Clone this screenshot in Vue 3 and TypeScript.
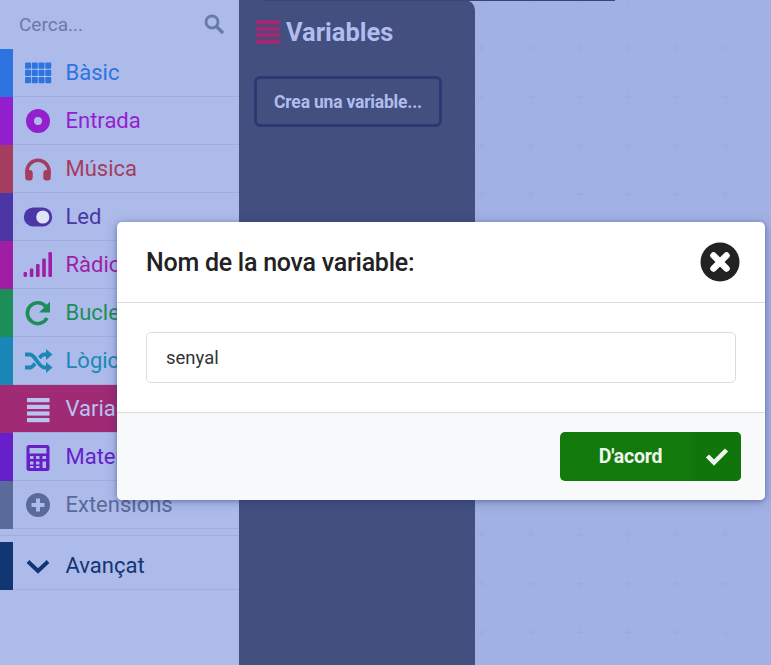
<script setup lang="ts">
interface Category { name: string; color: string; icon: string; active?: boolean }
const categories: Category[] = [
  { name: 'Bàsic', color: '#2d74e0', icon: 'grid' },
  { name: 'Entrada', color: '#941fce', icon: 'disc' },
  { name: 'Música', color: '#a53d5f', icon: 'head' },
  { name: 'Led', color: '#4c36a6', icon: 'toggle' },
  { name: 'Ràdio', color: '#a01ea5', icon: 'signal' },
  { name: 'Bucles', color: '#1c8f58', icon: 'redo' },
  { name: 'Lògica', color: '#1a87b8', icon: 'shuffle' },
  { name: 'Variables', color: '#a02a74', icon: 'bars', active: true },
  { name: 'Matemàtiques', color: '#671fc9', icon: 'calc' },
  { name: 'Extensions', color: '#5a6a9a', icon: 'plus' }
]
const gridCells = [0, 1, 2, 3].flatMap((c) => [0, 1, 2].map((r) => ({ x: c * 6.75, y: r * 7.25 })))
</script>

<template>
  <div class="page">
    <aside class="sidebar">
      <div class="search">
        <span>Cerca...</span>
        <svg class="search-icon" width="20" height="20" viewBox="0 0 20 20">
          <circle cx="8" cy="8" r="6" fill="none" stroke="currentColor" stroke-width="2.8" />
          <path d="M12.5 12.5L18 18" stroke="currentColor" stroke-width="3.4" stroke-linecap="round" />
        </svg>
      </div>
      <ul class="list">
        <li
          v-for="c in categories"
          :key="c.name"
          class="row"
          :class="{ active: c.active }"
          :style="{ '--cat': c.color }"
        >
          <span class="strip"></span>
          <svg class="icon" width="30" height="30" viewBox="0 0 30 30">
            <g v-if="c.icon === 'grid'" fill="currentColor">
              <rect v-for="(g, i) in gridCells" :key="i" :x="2 + g.x" :y="4.5 + g.y" width="6" height="6.2" rx="1" />
            </g>
            <path v-else-if="c.icon === 'disc'" fill="currentColor" fill-rule="evenodd"
              d="M15 3a12 12 0 1 0 0 24a12 12 0 1 0 0-24zM15 11a4 4 0 1 1 0 8a4 4 0 1 1 0-8z" />
            <g v-else-if="c.icon === 'head'" fill="currentColor">
              <path d="M2.200 20v-2.700a12.800 12.800 0 0 1 25.600 0V20h-3.600v-2.700a9.200 9.200 0 0 0-18.400 0V20z" />
              <rect x="2.200" y="16" width="7.500" height="10.500" rx="3" />
              <rect x="20.300" y="16" width="7.500" height="10.500" rx="3" />
            </g>
            <g v-else-if="c.icon === 'toggle'">
              <rect x="0.800" y="5.500" width="28.400" height="19" rx="9.500" fill="currentColor" />
              <circle cx="19.800" cy="15" r="6.600" fill="#dfe3f7" />
            </g>
            <g v-else-if="c.icon === 'signal'" fill="currentColor">
              <rect x="0.500" y="22" width="3.600" height="5" rx="1.400" />
              <rect x="6.800" y="18.500" width="3.600" height="8.500" rx="1.200" />
              <rect x="13" y="14" width="3.600" height="13" rx="1.200" />
              <rect x="19.200" y="8.500" width="3.600" height="18.500" rx="1.200" />
              <rect x="25.400" y="2" width="3.600" height="25" rx="1.200" />
            </g>
            <g v-else-if="c.icon === 'redo'">
              <path d="M22.800 8.500A10.400 10.400 0 1 0 24 20" fill="none" stroke="currentColor" stroke-width="3.600" />
              <path d="M27 3.500V14.500H16z" fill="currentColor" />
            </g>
            <g v-else-if="c.icon === 'shuffle'">
              <path d="M2 8.500H7C12 8.500 16 21.500 21 21.500H24" fill="none" stroke="currentColor" stroke-width="3.800" />
              <path d="M2 21.500H7C9 21.500 10.500 19.500 12 17.500M16.500 12C18 10 19 8.500 21 8.500H24" fill="none" stroke="currentColor" stroke-width="3.800" />
              <path d="M23 3L29.500 8.500L23 14zM23 16L29.500 21.500L23 27z" fill="currentColor" />
            </g>
            <g v-else-if="c.icon === 'bars'" fill="currentColor">
              <rect x="4" y="4" width="22.500" height="4.200" />
              <rect x="4" y="10.800" width="22.500" height="4.200" />
              <rect x="4" y="17.400" width="22.500" height="4.200" />
              <rect x="4" y="24" width="22.500" height="4.200" />
            </g>
            <path v-else-if="c.icon === 'calc'" fill="currentColor" fill-rule="evenodd"
              d="M6 3h18a2.500 2.500 0 0 1 2.500 2.500v21A2.500 2.500 0 0 1 24 29H6a2.500 2.500 0 0 1-2.500-2.500v-21A2.500 2.500 0 0 1 6 3zM6.500 6v5.500h17V6zM7 14v3h3.500v-3zM13 14v3h3.500v-3zM19.500 14v3H23v-3zM7 19.500v3h3.500v-3zM13 19.500v3h3.500v-3zM19.500 19.500V26H23v-6.500zM7 24v2h3.500v-2zM13 24v2h3.500v-2z" />
            <path v-else-if="c.icon === 'plus'" fill="currentColor" fill-rule="evenodd"
              d="M15 3a12 12 0 1 0 0 24a12 12 0 1 0 0-24zM13 8.500h4v4.500h4.500v4H17v4.500h-4V17H8.500v-4H13z" />
          </svg>
          <span class="label">{{ c.name }}</span>
        </li>
      </ul>
      <div class="row advanced" style="--cat: #123672">
        <span class="strip"></span>
        <svg class="icon" width="30" height="30" viewBox="0 0 30 30">
          <path d="M5 10.500L15 20L25 10.500" fill="none" stroke="currentColor" stroke-width="4" />
        </svg>
        <span class="label">Avançat</span>
      </div>
    </aside>

    <section class="flyout">
      <div class="fly-title">
        <svg width="24" height="24" viewBox="0 0 24 24" fill="#9c2b72">
          <rect x="0" y="0" width="24" height="4.400" />
          <rect x="0" y="6.600" width="24" height="4.400" />
          <rect x="0" y="13" width="24" height="4.400" />
          <rect x="0" y="19.600" width="24" height="4.400" />
        </svg>
        <span>Variables</span>
      </div>
      <div class="create">Crea una variable...</div>
    </section>

    <main class="workspace">
      <svg class="dots" width="100%" height="100%">
        <defs>
          <pattern id="plus" x="-17.35" y="23.65" width="48.7" height="48.7" patternUnits="userSpaceOnUse">
            <path d="M20.350 24.350h8M24.350 20.350v8" stroke="#9aa9de" stroke-width="1" />
          </pattern>
        </defs>
        <rect width="100%" height="100%" fill="url(#plus)" />
      </svg>
    </main>

    <div class="topline"></div>

    <div class="modal">
      <header class="m-head">
        <h1>Nom de la nova variable:</h1>
        <svg width="40" height="40" viewBox="0 0 40 40">
          <circle cx="20" cy="20" r="19.500" fill="#222" />
          <path d="M13.500 13.500L26.500 26.500M26.500 13.500L13.500 26.500" stroke="#fff" stroke-width="6.500" stroke-linecap="round" />
        </svg>
      </header>
      <div class="m-body">
        <div class="input">senyal</div>
      </div>
      <footer class="m-foot">
        <div class="ok">
          <span class="ok-text">D'acord</span>
          <span class="ok-icon">
            <svg class="check" width="24" height="20" viewBox="0 0 24 20">
              <path d="M2.500 10L9 16.500L21.500 4" fill="none" stroke="#eef6ee" stroke-width="4.500" />
            </svg>
          </span>
        </div>
      </footer>
    </div>
  </div>
</template>

<style>
html, body { margin: 0; padding: 0; }
</style>

<style scoped>
.page {
  position: relative;
  display: flex;
  width: 771px;
  height: 665px;
  overflow: hidden;
  font-family: Roboto, "Liberation Sans", sans-serif;
  background: #a2b1e4;
}
.sidebar {
  width: 239px;
  flex: none;
  background: #adbbeb;
  box-sizing: border-box;
}
.search {
  height: 49px;
  box-sizing: border-box;
  display: flex;
  align-items: center;
  justify-content: space-between;
  padding: 0 15px 1px 19px;
  color: #6a7aa8;
  font-size: 19px;
}
.search-icon { color: #6a7aa8; }
.list { list-style: none; margin: 0; padding: 0; }
.row {
  height: 48px;
  box-sizing: border-box;
  display: flex;
  align-items: center;
  color: var(--cat);
  border-bottom: 1px solid #a0aedf;
}
.strip {
  width: 13px;
  height: 48px;
  flex: none;
  background: var(--cat);
  margin-bottom: -1px;
}
.icon { margin: 0 12.500px 0 10px; flex: none; }
.label { font-size: 22px; white-space: nowrap; }
.row.active { background: var(--cat); color: #b7c4f2; }
.advanced {
  margin-top: 13px;
  position: relative;
}
.advanced::before {
  content: "";
  position: absolute;
  left: 0;
  right: 0;
  top: -7px;
  border-top: 1px solid #a0aedf;
}
.flyout {
  width: 236px;
  flex: none;
  box-sizing: border-box;
  background: #424f7f;
  border-top-right-radius: 10px;
  padding: 20px 0 0 15px;
}
.fly-title {
  display: flex;
  align-items: center;
  gap: 6px;
  padding-left: 2px;
  height: 24px;
  color: #b0bdee;
  font-size: 25.500px;
  font-weight: 700;
}
.create {
  margin-top: 32px;
  width: 188px;
  height: 51px;
  box-sizing: border-box;
  border: 3px solid #2b3a72;
  border-radius: 6px;
  display: flex;
  align-items: center;
  justify-content: center;
  color: #b0bdee;
  font-size: 17.500px;
  font-weight: 700;
  letter-spacing: -0.2px;
}
.workspace { flex: 1; min-width: 0; }
.dots { display: block; }
.topline {
  position: absolute;
  left: 265px;
  top: 0;
  width: 350px;
  height: 1px;
  background: #37467a;
}
.modal {
  position: absolute;
  left: 117px;
  top: 222px;
  width: 648px;
  height: 278px;
  border-radius: 5px;
  background: #fff;
  overflow: hidden;
  box-shadow: 0 1px 4px rgba(40, 50, 110, 0.35), 0 2px 12px rgba(40, 50, 110, 0.3);
  display: flex;
  flex-direction: column;
}
.m-head {
  height: 81px;
  box-sizing: border-box;
  flex: none;
  border-bottom: 1px solid #dcdcdc;
  display: flex;
  align-items: center;
  justify-content: space-between;
  padding: 0 25px 0 29px;
  color: #222;
}
.m-head h1 {
  margin: 0;
  font-size: 25px;
  font-weight: 500;
  letter-spacing: -0.25px;
}
.m-body {
  height: 110px;
  box-sizing: border-box;
  flex: none;
  border-bottom: 1px solid #dcdcdc;
  padding: 29px 29px 0;
}
.input {
  height: 51px;
  box-sizing: border-box;
  border: 1px solid #dcdcdc;
  border-radius: 5px;
  padding-left: 19px;
  display: flex;
  align-items: center;
  font-size: 18.500px;
  color: #333;
}
.m-foot {
  flex: 1;
  background: #f8f9fb;
  display: flex;
  justify-content: flex-end;
  padding: 19px 24px 0 0;
}
.ok {
  width: 181px;
  height: 49px;
  border-radius: 5px;
  background: #117a0b;
  color: #eef6ee;
  display: flex;
  overflow: hidden;
}
.ok-text {
  flex: 1;
  display: flex;
  align-items: center;
  justify-content: center;
  padding-left: 9px;
  font-size: 19.500px;
  font-weight: 700;
  letter-spacing: -0.2px;
}
.ok-icon {
  width: 49px;
  background: #10750a;
  display: flex;
  align-items: center;
  justify-content: center;
  padding-bottom: 2px;
  box-sizing: border-box;
}
.check { display: block; }
</style>
